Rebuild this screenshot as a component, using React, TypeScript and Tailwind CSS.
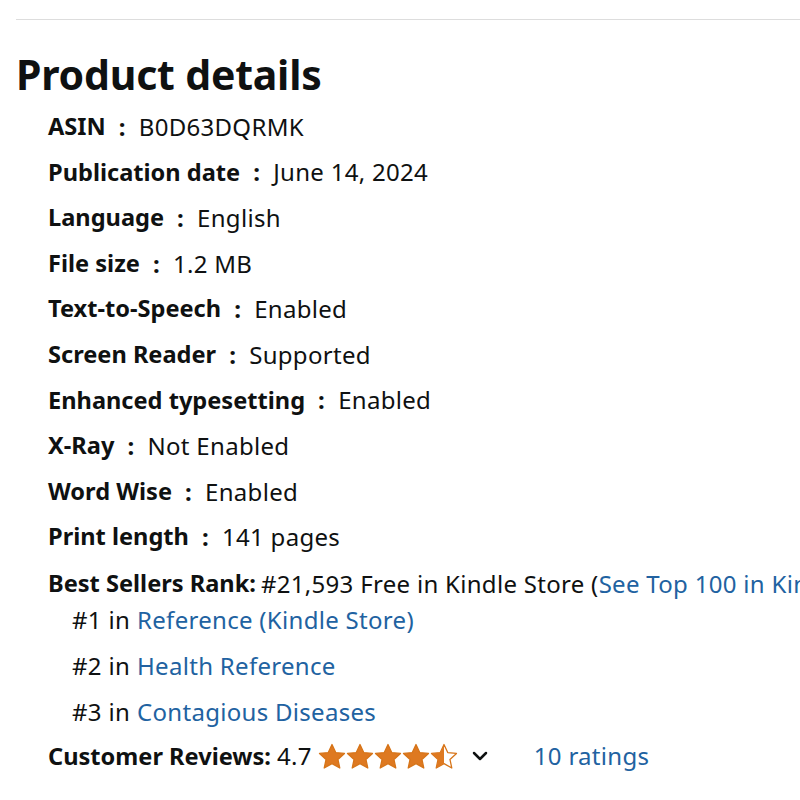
import { ChevronDown } from "lucide-react"

const details = [
  ["ASIN", "B0D63DQRMK"],
  ["Publication date", "June 14, 2024"],
  ["Language", "English"],
  ["File size", "1.2 MB"],
  ["Text-to-Speech", "Enabled"],
  ["Screen Reader", "Supported"],
  ["Enhanced typesetting", "Enabled"],
  ["X-Ray", "Not Enabled"],
  ["Word Wise", "Enabled"],
  ["Print length", "141 pages"],
]

const ranks = [
  ["#1", "Reference (Kindle Store)"],
  ["#2", "Health Reference"],
  ["#3", "Contagious Diseases"],
]

const starPath = "M12 1.2l3.2 6.9 7.5.8-5.6 5.1 1.6 7.4L12 17.6l-6.7 3.8 1.6-7.4L1.3 8.9l7.5-.8z"

function Star({ half }: { half?: boolean }) {
  return (
    <svg width="28" height="27" viewBox="0 0 24 23">
      <defs>
        <clipPath id="halfclip">
          <rect x="0" y="0" width="12" height="23" />
        </clipPath>
      </defs>
      <path
        d={starPath}
        fill={half ? "#fff" : "#de7921"}
        stroke="#d67418"
        strokeWidth="1.1"
        strokeLinejoin="round"
      />
      {half && <path d={starPath} fill="#de7921" clipPath="url(#halfclip)" />}
    </svg>
  )
}

export default function App() {
  return (
    <div className="min-h-screen bg-white text-[#0f1111] font-['Noto_Sans',sans-serif] overflow-hidden">
      <div className="pt-[19px] pl-4">
        <div className="h-px bg-[#dddddd]" />
      </div>
      <h2 className="pl-4 pt-[29px] text-[41px] font-bold leading-[50px] tracking-[-0.2px]">Product details</h2>
      <ul className="pl-12 pt-[5px] text-[24px] tracking-[0.3px] whitespace-nowrap">
        {details.map(([k, v]) => (
          <li key={k} className="h-[45.6px] flex items-center">
            <span className="font-bold text-[23.6px] tracking-normal">{k}</span>
            <span className="font-bold mx-[13px]">:</span>
            <span>{v}</span>
          </li>
        ))}
        <li className="h-[45.6px] flex items-center mt-[1px]">
          <span className="font-bold text-[23.6px] tracking-normal mr-[5px]">Best Sellers Rank:</span>
          <span>#21,593 Free in Kindle Store (</span>
          <span className="text-[#2162a1]">See Top 100 in Kindle Store</span>
          <span>)</span>
        </li>
        <li className="-mt-[10px]">
          <ul>
            {ranks.map(([n, t]) => (
              <li key={n} className="h-[46px] flex items-center pl-6">
                <span className="mr-[7px]">{n} in</span>
                <span className="text-[#2162a1]">{t}</span>
              </li>
            ))}
          </ul>
        </li>
        <li className="h-[45.6px] flex items-center -mt-[1px]">
          <span className="font-bold text-[23.6px] tracking-normal mr-[6px]">Customer Reviews:</span>
          <span className="mr-[6px]">4.7</span>
          <span className="flex items-center">
            <Star />
            <Star />
            <Star />
            <Star />
            <Star half />
          </span>
          <ChevronDown className="ml-[10px] w-6 h-6" strokeWidth={2.5} />
          <span className="ml-[42px] text-[#2162a1]">10 ratings</span>
        </li>
      </ul>
    </div>
  )
}
